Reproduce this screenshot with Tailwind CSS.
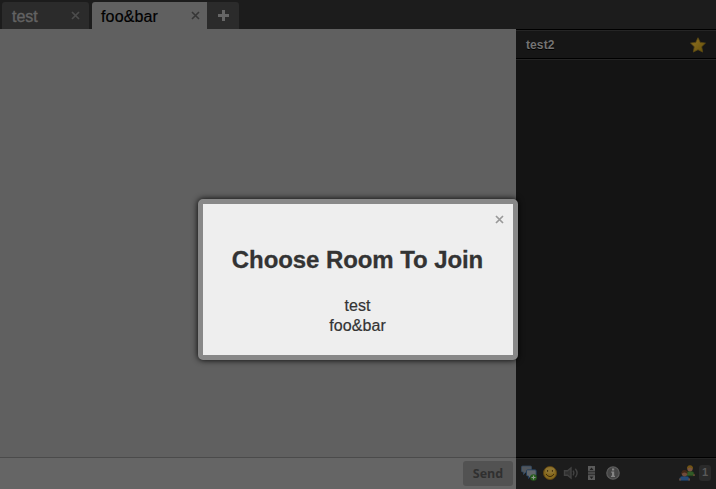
<!DOCTYPE html>
<html lang="en">
<head>
<meta charset="utf-8">
<title>Chat</title>
<script src="https://cdn.jsdelivr.net/npm/@tailwindcss/browser@4"></script>
</head>
<body class="w-[716px] h-[489px] overflow-hidden bg-[#141414] font-['Liberation_Sans',Arial,sans-serif]">
<div class="flex flex-col w-full h-full">
  <header class="flex h-[29px] shrink-0 items-end bg-[#1c1c1c] pl-0.5 text-base leading-[27px]">
    <div class="flex h-[27px] w-[87px] items-center justify-between rounded-t-[3px] bg-[#2b2b2b] pl-2.5 pr-[9px] text-[#636363]">
      <span class="pt-0.5 [-webkit-text-stroke:0.4px]">test</span>
      <svg class="size-[9px]" viewBox="0 0 9 9" fill="none" stroke="#4c4c4c" stroke-width="1.7"><path d="M1 1l7 7M8 1L1 8"/></svg>
    </div>
    <div class="ml-[3px] flex h-[27px] w-[115px] items-center justify-between rounded-tl-[3px] bg-[#606060] pl-[9px] pr-[7px] text-black">
      <span class="pt-0.5 tracking-[0.15px] [-webkit-text-stroke:0.2px]">foo&amp;bar</span>
      <svg class="size-[9px]" viewBox="0 0 9 9" fill="none" stroke="#363636" stroke-width="1.6"><path d="M1 1l7 7M8 1L1 8"/></svg>
    </div>
    <div class="flex h-[27px] w-8 items-center justify-center rounded-tr-[3px] bg-[#2b2b2b]">
      <svg class="size-[11px]" viewBox="0 0 11 11" fill="#666"><path d="M4 0h3v4h4v3H7v4H4V7H0V4h4z"/></svg>
    </div>
  </header>
  <div class="flex min-h-0 flex-1">
    <main class="flex w-[516px] flex-col bg-[#606060]">
      <div class="flex-1"></div>
      <div class="flex h-8 items-start justify-end border-t border-[#4b4b4b] bg-[#656565] pr-[3px] pt-[3px]">
        <div class="flex h-[25px] w-[50px] items-center justify-center rounded-[3px] bg-[#525252] pt-0.5 font-['Open_Sans',sans-serif] text-[12.5px] font-bold text-[#303030]">Send</div>
      </div>
    </main>
    <aside class="flex w-[200px] flex-col bg-[#141414]">
      <div class="flex h-[30px] items-center justify-between border-y border-black bg-[#161616] px-2.5 shadow-[inset_0_1px_0_#252525,0_1px_0_#252525]">
        <span class="pt-0.5 text-xs font-bold tracking-[0.1px] text-[#737373] [text-shadow:0_1px_0_#000]">test2</span>
        <svg class="mt-px size-4" viewBox="0 0 16 16"><defs><linearGradient id="star" x2="1" y2="1"><stop stop-color="#917325"/><stop offset="1" stop-color="#655009"/></linearGradient></defs><path fill="url(#star)" stroke="#594713" stroke-width=".8" stroke-linejoin="round" d="M8 .7l2.300 4.700 5.200.7-3.800 3.700 1 5.300L8 12.700l-4.700 2.400 1-5.300L.5 6.100l5.200-.7z"/></svg>
      </div>
      <div class="flex-1"></div>
      <div class="flex h-8 items-center border-t border-black bg-[#1c1c1c] px-[5px] pb-[2px] shadow-[inset_0_1px_0_#252525]">
        <svg class="size-4 shrink-0" viewBox="0 0 16 16"><path fill="#51565c" stroke="#304860" stroke-width=".8" d="M1.500 1h8q1 0 1 1v4q0 1-1 1H5L2.500 9.500V7h-1q-1 0-1-1V2q0-1 1-1z"/><path fill="#62676b" stroke="#213d5b" stroke-width=".9" d="M6.500 4.800H14q1.200 0 1.200 1v4q0 1.200-1.200 1.200h-4l-2.500 2.500V11h-1q-1 0-1-1V5.800q0-1 1-1z"/><circle cx="12.500" cy="12.500" r="3.300" fill="#265d1c"/><path stroke="#8d988a" stroke-width="1.200" d="M12.500 10.500v4M10.500 12.500h4"/></svg>
        <svg class="ml-[5px] size-4 shrink-0" viewBox="0 0 16 16"><circle cx="8" cy="8" r="6.500" fill="#86691e" stroke="#604511"/><ellipse cx="8" cy="5.500" rx="4.800" ry="3.200" fill="#8d7330"/><path fill="none" stroke="#3d2b0c" d="M5.600 5v1.800M10.400 5v1.800M4 9q1.600 2.600 4 2.600T12 9"/></svg>
        <svg class="ml-[5px] size-4 shrink-0" viewBox="0 0 16 16" fill="none" stroke="#424242" stroke-width="1.400"><path fill="#303030" d="M1.500 5.700h3L8 3v10l-3.500-2.700h-3z"/><path d="M10 5.700q1.700 2.300 0 4.600M12.300 3.700q3.600 4.300 0 8.600"/></svg>
        <svg class="ml-1 size-4 shrink-0" viewBox="0 0 16 16"><path fill="#494949" d="M5 1h7v14H5z"/><path fill="#5b5b5b" d="M5 1h7v5H5zM5 10h7v5H5z"/><path fill="#202020" d="M8.500 2.500l2 2.500h-4zM6.500 11.500h4l-2 2.500z"/><path stroke="#2a2a2a" stroke-width=".8" d="M5 6.300h7M5 9.700h7"/></svg>
        <svg class="ml-[6px] size-4 shrink-0" viewBox="0 0 16 16"><circle cx="8" cy="8" r="6.200" fill="#454545" stroke="#5c5c5c" stroke-width="1.200"/><path fill="#858585" d="M7 3.500h2.200v2H7zM6.200 6.500h3v4.300H10V12H6v-1.200h1V7.700h-.8z"/></svg>
        <div class="flex-1"></div>
        <svg class="size-4 shrink-0" viewBox="0 0 16 16"><path fill="#315a26" stroke="#20441b" stroke-width=".6" d="M7 10.800V8.500q.3-1.800 2.300-2h3.400q2 .2 2.300 2v2.300z"/><path fill="#6c4c38" d="M14.200 9.200h1.600v1.800h-1.600z"/><circle cx="11" cy="3.700" r="2.700" fill="#785541"/><path fill="#725414" d="M8 4.200Q7.800.3 11 .3t3 3.900Q12.800 2.600 11 2.600T8 4.200z"/><path fill="#254a76" stroke="#183556" stroke-width=".6" d="M.7 15.500v-2q.3-2 2.300-2.200h5q2 .2 2.300 2.200v2z"/><circle cx="5.500" cy="8.600" r="2.800" fill="#704b3a"/><path fill="#422817" d="M2.500 9.300Q2.200 5 5.500 5t3 4.300Q7.500 7.400 5.500 7.400T2.500 9.300z"/><path fill="#6c4c38" d="M.2 13.500h1.700v1.900H.2zM9.300 13.500H11v1.900H9.300z"/></svg>
        <div class="ml-1 flex h-4 w-3 items-center justify-center rounded-[3px] bg-[#2a2a2a] text-[11px] font-bold text-[#595959]">1</div>
      </div>
    </aside>
  </div>
</div>
<div class="absolute left-[198px] top-[199px] h-[161px] w-[320px] rounded-[5px] border-[5px] border-[#888] bg-[#eee] text-center text-[#333] shadow-[0_0_6px_#000]">
  <div class="flex h-[30px] items-center justify-end pr-[9px]">
    <svg class="size-[9px]" viewBox="0 0 9 9" fill="none" stroke="#999" stroke-width="1.700"><path d="M1 1l7 7M8 1L1 8"/></svg>
  </div>
  <h2 class="mt-[11px] whitespace-nowrap pr-px text-2xl font-bold leading-[30px] tracking-[-0.08px] [-webkit-text-stroke:0.3px]">Choose Room To Join</h2>
  <div class="mt-[21px] pr-px text-base leading-5 tracking-[0.1px] [-webkit-text-stroke:0.2px]">
    <div>test</div>
    <div>foo&amp;bar</div>
  </div>
</div>
</body>
</html>
